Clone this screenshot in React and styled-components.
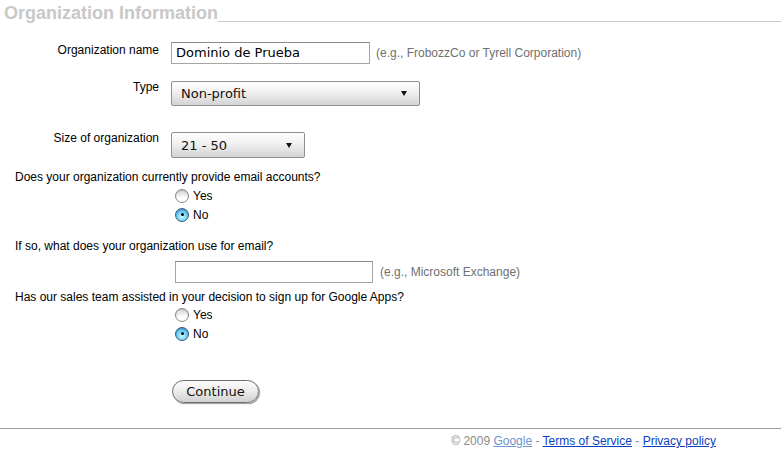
import React from 'react';
import styled, { createGlobalStyle } from 'styled-components';

const GlobalStyle = createGlobalStyle`
  html, body {
    margin: 0;
    padding: 0;
    background: #fff;
  }
  body {
    font-family: "Liberation Sans", Arial, sans-serif;
    font-size: 12px;
    color: #000;
  }
`;

const Page = styled.div`
  width: 781px;
  padding-top: 3px;
`;

const Header = styled.div`
  display: flex;
  align-items: flex-end;
  padding-left: 4px;
`;

const Title = styled.h1`
  margin: 0;
  font-size: 18px;
  line-height: 20px;
  font-weight: bold;
  color: #c8c8c8;
`;

const TitleRule = styled.span`
  flex: 1;
  border-bottom: 1px solid #c8c8c8;
  margin-bottom: 1px;
`;

const FieldRow = styled.div`
  display: grid;
  grid-template-columns: 159px auto auto;
  column-gap: 12px;
  justify-content: start;
  align-items: start;
  margin-top: ${(p) => p.$top}px;
`;

const Label = styled.label`
  text-align: right;
  line-height: 14px;
  margin-top: ${(p) => p.$shift ?? 1}px;
`;

const TextInput = styled.div`
  box-sizing: border-box;
  width: ${(p) => p.$w}px;
  height: 22px;
  border: 1px solid #a5a5a5;
  border-top-color: #8a8a8a;
  padding: 0 4px;
  font-family: "DejaVu Sans", sans-serif;
  font-size: 13px;
  line-height: 20px;
  color: #000;
  background: #fff;
`;

const Select = styled.div`
  box-sizing: border-box;
  width: ${(p) => p.$w}px;
  height: ${(p) => p.$h}px;
  display: flex;
  align-items: center;
  justify-content: space-between;
  padding: 0 12px 0 9px;
  border: 1px solid #8e8e8e;
  border-radius: 2px;
  background: linear-gradient(#ffffff 0%, #f2f2f2 40%, #d4d4d4 100%);
  font-family: "DejaVu Sans", sans-serif;
  font-size: 13px;
  color: #111;
`;

const Arrow = styled.span`
  width: 0;
  height: 0;
  border-left: 3px solid transparent;
  border-right: 3px solid transparent;
  border-top: 5px solid #111;
`;

const Hint = styled.span`
  color: #707070;
  line-height: 22px;
  margin-left: ${(p) => p.$ml ?? -6}px;
`;

const Question = styled.div`
  padding-left: 15px;
  line-height: 14px;
  margin-top: ${(p) => p.$top}px;
`;

const Options = styled.div`
  padding-left: 175px;
  margin-top: ${(p) => p.$top}px;
`;

const Option = styled.div`
  display: flex;
  align-items: center;
  height: 19px;
  gap: 4px;
`;

const Radio = styled.span`
  box-sizing: border-box;
  width: 14px;
  height: 14px;
  border-radius: 50%;
  border: 1px solid ${(p) => (p.$on ? '#36587c' : '#888888')};
  box-shadow: inset 0 1px 1px rgba(0, 0, 0, 0.15);
  background: ${(p) =>
    p.$on
      ? 'radial-gradient(circle at 50% 65%, #d2f6ff 0%, #6fd0f5 50%, #2b86c2 100%)'
      : 'linear-gradient(#d6d6d6, #ffffff 70%)'};
  display: flex;
  align-items: center;
  justify-content: center;
  &::after {
    content: '';
    width: 3px;
    height: 3px;
    border-radius: 50%;
    background: #000;
    display: ${(p) => (p.$on ? 'block' : 'none')};
  }
`;

const InputLine = styled.div`
  display: flex;
  align-items: center;
  padding-left: 175px;
  margin-top: ${(p) => p.$top}px;
  gap: 7px;
`;

const ButtonRow = styled.div`
  padding-left: 172px;
  margin-top: ${(p) => p.$top}px;
`;

const Button = styled.button`
  box-sizing: border-box;
  width: 87px;
  height: 23px;
  border-radius: 12px;
  border: 1px solid #6e6e6e;
  background: linear-gradient(#fbfbfb 0%, #eeeeee 45%, #d0d0d0 100%);
  box-shadow: 1px 1px 1px #9a9a9a;
  font-family: "DejaVu Sans", sans-serif;
  font-size: 13px;
  color: #111;
  padding: 0;
`;

const Footer = styled.div`
  margin-top: 25px;
  border-top: 1px solid #9c9c9c;
  padding: 5px 65px 0 0;
  text-align: right;
  color: #8a8a8a;
  line-height: 14px;
`;

const FooterLink = styled.a`
  color: ${(p) => (p.$visited ? '#6b95cc' : '#0a3fc0')};
  text-decoration: underline;
`;

function RadioGroup({ top, value }) {
  return (
    <Options $top={top}>
      <Option>
        <Radio $on={value === 'yes'} />
        Yes
      </Option>
      <Option>
        <Radio $on={value === 'no'} />
        No
      </Option>
    </Options>
  );
}

export default function App() {
  return (
    <Page>
      <GlobalStyle />
      <Header>
        <Title>Organization Information</Title>
        <TitleRule />
      </Header>

      <FieldRow $top={19}>
        <Label>Organization name</Label>
        <TextInput $w={199}>Dominio de Prueba</TextInput>
        <Hint>(e.g., FrobozzCo or Tyrell Corporation)</Hint>
      </FieldRow>

      <FieldRow $top={17}>
        <Label $shift={-1}>Type</Label>
        <Select $w={249} $h={25}>
          Non-profit
          <Arrow />
        </Select>
      </FieldRow>

      <FieldRow $top={26}>
        <Label $shift={-1}>Size of organization</Label>
        <Select $w={134} $h={26}>
          21 - 50
          <Arrow />
        </Select>
      </FieldRow>

      <Question $top={12}>Does your organization currently provide email accounts?</Question>
      <RadioGroup top={2} value="no" />

      <Question $top={15}>If so, what does your organization use for email?</Question>
      <InputLine $top={8}>
        <TextInput $w={198} />
        <Hint $ml={0}>(e.g., Microsoft Exchange)</Hint>
      </InputLine>

      <Question $top={7}>Has our sales team assisted in your decision to sign up for Google Apps?</Question>
      <RadioGroup top={1} value="no" />

      <ButtonRow $top={37}>
        <Button>Continue</Button>
      </ButtonRow>

      <Footer>
        © 2009 <FooterLink $visited href="#">Google</FooterLink> -{' '}
        <FooterLink href="#">Terms of Service</FooterLink> -{' '}
        <FooterLink href="#">Privacy policy</FooterLink>
      </Footer>
    </Page>
  );
}
